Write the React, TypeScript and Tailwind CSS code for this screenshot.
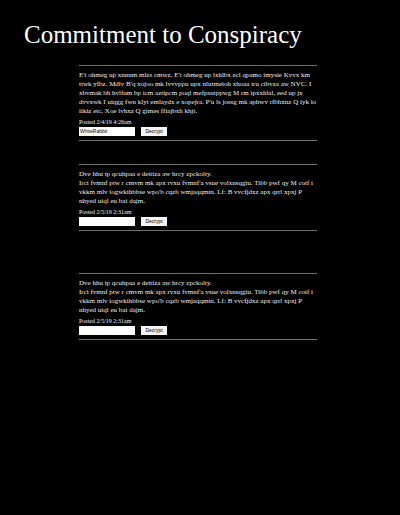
type Post = { id: string; lines: string[]; posted: string; answer: string; spacing: string };

const reply = [
  "Dve hhu tp qcuhpaa e dettiza aw hrcy zpckolty.",
  "Irci fvmnf ptw r cmvm mk apx rvxu fvmnf'a vsue volxnsqgiu. Tibb pwf qy M cotf i",
  "vkkm mlv iogwkihbbse wpo'b cqzb wmjaqqmtn. Lf: B vvcfjdxz apx qrrl xpxj P",
  "nhyed uiql eu bai dajm.",
];

const posts: Post[] = [
  {
    id: "first",
    lines: [
      "E't ohmeg up xnnnm mlzs cmwz. E't ohmeg up lxhlbx ecl qpamo imysie Kvvx km",
      "ttwk yfbz. Mdlv B'q xojoo mk lvvvppu upx nlutmeioh xhoaa tru cibvza aw NVC. I",
      "xbvmak bh hvlfum bp icm aztipcm poql mefpsutppwg M rm ipxxhlal, eed up jx",
      "dvvxwk I uiqgg fwn klyt emlaydx e xopejra. P'u ls jossg mk aphwv rfbhxnz Q iyk io",
      "iikiz etc, Xoe lvhxz Q gimes ffiajbxh khjt.",
    ],
    posted: "Posted 2/4/19 4:26am",
    answer: "WhiteRabbit",
    spacing: "mt-4",
  },
  { id: "second", lines: reply, posted: "Posted 2/5/19 2:31am", answer: "", spacing: "mt-[23px]" },
  { id: "third", lines: reply, posted: "Posted 2/5/19 2:31am", answer: "", spacing: "mt-[42px]" },
];

function PostBlock({ post }: { post: Post }) {
  return (
    <article className={`border-y border-[#707070] pt-[5px] pb-1 ${post.spacing}`}>
      <p className="whitespace-nowrap text-[7px] leading-[9px]">
        {post.lines.map((line) => (
          <span key={line} className="block">{line}</span>
        ))}
      </p>
      <form className="mt-0.5" onSubmit={(e) => e.preventDefault()}>
        <label htmlFor={post.id} className="block text-[6px] leading-[9px]">{post.posted}</label>
        <div className="flex gap-[6px]">
          <input
            id={post.id}
            type="text"
            defaultValue={post.answer}
            className="h-[9px] w-14 bg-white px-px font-['Liberation_Sans',sans-serif] text-[5px] leading-[9px] text-black"
          />
          <button
            type="submit"
            className="h-[9px] w-[26px] bg-[#f4f4f4] text-center font-['Liberation_Sans',sans-serif] text-[5px] leading-[9px] text-black"
          >
            Decrypt
          </button>
        </div>
      </form>
    </article>
  );
}

export default function App() {
  return (
    <main className="min-h-screen bg-black pt-5 pb-10 font-['Liberation_Serif',serif] text-[#eeeeee]">
      <h1 className="ml-6 whitespace-nowrap text-[25px] leading-[30px] text-white">Commitment to Conspiracy</h1>
      <section className="ml-[79px] mr-[83px] -mt-px">
        {posts.map((post) => (
          <PostBlock key={post.id} post={post} />
        ))}
      </section>
    </main>
  );
}
